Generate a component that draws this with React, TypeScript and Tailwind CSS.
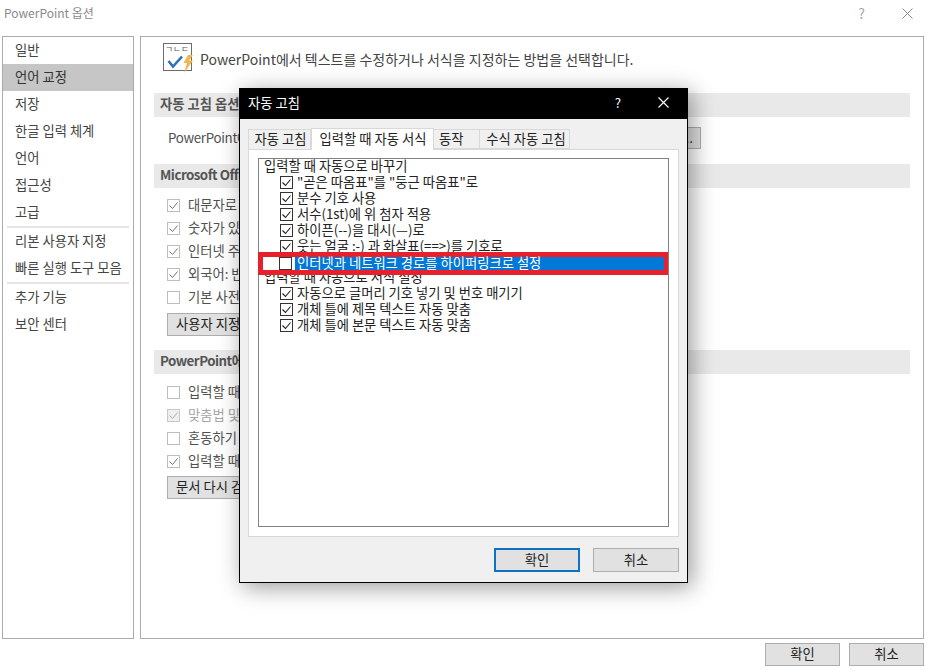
import React from 'react';

const sideTop = ['일반', '언어 교정', '저장', '한글 입력 체계', '언어', '접근성', '고급'];
const sideMid = ['리본 사용자 지정', '빠른 실행 도구 모음'];
const sideEnd = ['추가 기능', '보안 센터'];

const Check = ({ on = false, dim = false }: { on?: boolean; dim?: boolean }) => (
  <span className={`flex h-[13px] w-[13px] shrink-0 items-center justify-center border ${dim ? 'border-[#c8c8c8] bg-[#efefef]' : 'border-[#bdbdbd] bg-white'}`}>
    {on && (
      <svg width="11" height="11" viewBox="0 0 11 11" fill="none" stroke={dim ? '#b0b0b0' : '#707070'} strokeWidth="1">
        <path d="M1.5 5.5 L4.5 8.5 L9.5 2.5" />
      </svg>
    )}
  </span>
);

const DlgCheck = ({ on = true }: { on?: boolean }) => (
  <span className="flex h-[13px] w-[13px] shrink-0 items-center justify-center border border-[#333333] bg-white">
    {on && (
      <svg width="11" height="11" viewBox="0 0 11 11" fill="none" stroke="#222222" strokeWidth="1.1">
        <path d="M1.5 5.5 L4.5 8.5 L9.5 2.5" />
      </svg>
    )}
  </span>
);

const OptRow = ({ label, on, dim }: { label: string; on?: boolean; dim?: boolean }) => (
  <div className={`flex h-[23px] items-center gap-2 pl-[13px] whitespace-nowrap ${dim ? 'text-[#a6a6a6]' : 'text-[#505050]'}`}>
    <Check on={on} dim={dim} />
    <span className="pb-[1px]">{label}</span>
  </div>
);

const Bar = ({ children, className }: { children: React.ReactNode; className: string }) => (
  <div className={`flex h-6 items-center bg-[#e9e9e9] pb-[3px] pl-[6px] font-semibold whitespace-nowrap text-[#555555] ${className}`}>{children}</div>
);

const DlgRow = ({ label }: { label: string }) => (
  <div className="flex h-4 items-center gap-[4px] pl-[21px] whitespace-nowrap">
    <DlgCheck />
    <span className="pb-[1px]">{label}</span>
  </div>
);

const GrayBtn = ({ label, className }: { label: string; className: string }) => (
  <button className={`flex items-center border border-[#adadad] bg-[#e1e1e1] pb-[1px] text-[#222222] ${className}`}>{label}</button>
);

export default function App() {
  return (
    <div className="relative flex h-[671px] w-[927px] flex-col overflow-hidden bg-white font-['Noto_Sans_CJK_KR',sans-serif] text-[13.3px] leading-none">
      {/* title bar */}
      <div className="flex h-9 items-center justify-between pr-[14px] pb-[10px] pl-1 text-[12px] text-[#8a8a8a]">
        <span>PowerPoint 옵션</span>
        <div className="flex items-center gap-[37px]">
          <span className="text-[14px] text-[#a8a8a8]">?</span>
          <svg width="11" height="11" viewBox="0 0 11 11" stroke="#8a8a8a" strokeWidth="1"><path d="M0.5 0.5 L10.5 10.5 M10.5 0.5 L0.5 10.5" /></svg>
        </div>
      </div>

      <div className="flex h-[603px] gap-[6px] pl-[2px]">
        {/* sidebar */}
        <div className="w-[132px] border border-[#ababab] text-[#444444]">
          {sideTop.map((s) => (
            <div key={s} className={`flex h-[27px] items-center pb-[2px] pl-3 ${s === '언어 교정' ? 'bg-[#c6c6c6] text-[#333333]' : ''}`}>{s}</div>
          ))}
          <div className="mx-1 h-[2px] bg-[#e5e5e5]" />
          {sideMid.map((s) => (
            <div key={s} className="flex h-[27px] items-center pb-[2px] pl-3">{s}</div>
          ))}
          <div className="mx-1 h-[2px] bg-[#e5e5e5]" />
          {sideEnd.map((s) => (
            <div key={s} className="flex h-[27px] items-center pb-[2px] pl-3">{s}</div>
          ))}
        </div>

        {/* main panel */}
        <div className="w-[784px] border border-[#ababab] px-[13px] pt-[7px]">
          <div className="flex h-[30px] items-center gap-[5px] pb-[1px] pl-[9px] text-[14px] text-[#444444]">
            <svg width="32" height="31" viewBox="0 0 32 31" fill="none" className="shrink-0">
              <rect x="0.5" y="0.5" width="28" height="27" fill="#ffffff" stroke="#6b6b6b" />
              <text x="2" y="8.5" fontSize="8" textLength="24" lengthAdjust="spacingAndGlyphs" fill="#555555" fontFamily="Noto Sans CJK KR">ㄱㄴㄷ</text>
              <path d="M5.5 18 L10 23.5 L19 13.5" stroke="#2f6fb5" strokeWidth="2.6" />
              <path d="M25 12 L20.5 20 L24 20 L21 30 L30 17.5 L26 17.5 L30 12 Z" fill="#f0b84a" />
            </svg>
            <span>PowerPoint에서 텍스트를 수정하거나 서식을 지정하는 방법을 선택합니다.</span>
          </div>

          <Bar className="mt-[19px]">자동 고침 옵션</Bar>
          <div className="mt-[10px] flex h-[22px] items-center justify-between pr-[209px] pl-[14px] whitespace-nowrap text-[#505050]">
            <span className="pb-[1px] tracking-[-0.3px]">PowerPoint에</span>
            <GrayBtn label="..." className="h-[22px] w-[120px] justify-end pr-[7px]" />
          </div>

          <Bar className="mt-[15px] tracking-[-0.5px]">Microsoft Offi</Bar>
          <div className="mt-[6px]">
            <OptRow on label="대문자로" />
            <OptRow on label="숫자가 있" />
            <OptRow on label="인터넷 주" />
            <OptRow on label="외국어: 반" />
            <OptRow label="기본 사전" />
          </div>
          <GrayBtn label="사용자 지정" className="mt-1 ml-[13px] h-[23px] w-[130px] pl-[8px]" />

          <Bar className="mt-[14px] tracking-[-0.5px]">PowerPoint에</Bar>
          <div className="mt-[7px]">
            <OptRow label="입력할 때" />
            <OptRow on dim label="맞춤법 및" />
            <OptRow label="혼동하기" />
            <OptRow on label="입력할 때" />
          </div>
          <GrayBtn label="문서 다시 검" className="mt-[3px] ml-[13px] h-[23px] w-[130px] pl-[8px]" />
        </div>
      </div>

      {/* footer buttons */}
      <div className="mt-1 flex justify-end gap-[9px] pr-[3px]">
        <GrayBtn label="확인" className="h-[23px] w-[75px] justify-center" />
        <GrayBtn label="취소" className="h-[23px] w-[75px] justify-center" />
      </div>

      {/* dialog */}
      <div className="absolute top-[88px] left-[239px] h-[495px] w-[449px] border border-black bg-[#f0f0f0] text-[#222222] shadow-[4px_4px_22px_rgba(0,0,0,0.4)]">
        <div className="flex h-[30px] items-center justify-between bg-black pr-[18px] pb-[2px] pl-2 text-white">
          <span>자동 고침</span>
          <div className="flex items-center gap-[37px]">
            <span>?</span>
            <svg width="11" height="11" viewBox="0 0 11 11" stroke="#ffffff" strokeWidth="1.1"><path d="M0.5 0.5 L10.5 10.5 M10.5 0.5 L0.5 10.5" /></svg>
          </div>
        </div>

        {/* tabs */}
        <div className="mt-[8px] flex h-[22px] items-end pl-2">
          <div className="flex h-[20px] w-[63px] items-center justify-center border border-b-0 border-[#d9d9d9] bg-[#f0f0f0] pb-[1px] pl-[2px]">자동 고침</div>
          <div className="relative z-10 -mb-[1px] flex h-[22px] w-[123px] items-center justify-center border border-b-0 border-[#d9d9d9] bg-white pb-[2px] pl-[1px]">입력할 때 자동 서식</div>
          <div className="flex h-[20px] w-[46px] items-center border-y border-r border-[#d9d9d9] pb-[1px] pl-[5px]">동작</div>
          <div className="flex h-[20px] w-[90px] items-center justify-center border-y border-r border-[#d9d9d9] pb-[1px] pl-[3px]">수식 자동 고침</div>
        </div>

        {/* panel */}
        <div className="mx-2 h-[388px] border border-[#d9d9d9] bg-white px-[9px] pt-2">
          <div className="h-[369px] border border-[#828282] bg-white">
            <div className="flex h-[15px] items-center pb-[1px] pl-[5px] whitespace-nowrap">입력할 때 자동으로 바꾸기</div>
            <DlgRow label={'"곧은 따옴표"를 "둥근 따옴표"로'} />
            <DlgRow label="분수 기호 사용" />
            <DlgRow label="서수(1st)에 위 첨자 적용" />
            <DlgRow label="하이픈(--)을 대시(—)로" />
            <DlgRow label="웃는 얼굴 :-) 과 화살표(==>)를 기호로" />
            {/* highlighted row framed in red */}
            <div className="relative z-10 -mt-[2px] -ml-[1px] flex h-[23px] w-[410px] border-y-[5px] border-r-4 border-l-[5px] border-[#e8202c]">
              <div className="flex h-[13px] w-[32px] items-center bg-white pl-[16px]">
                <DlgCheck on={false} />
              </div>
              <span className="flex h-[13px] flex-1 items-center bg-[#0078d7] pb-[1px] pl-[2px] whitespace-nowrap text-white">인터넷과 네트워크 경로를 하이퍼링크로 설정</span>
            </div>
            <div className="-mt-[5px] flex h-[15px] items-center pb-[1px] pl-[5px] whitespace-nowrap">입력할 때 자동으로 서식 설정</div>
            <DlgRow label="자동으로 글머리 기호 넣기 및 번호 매기기" />
            <DlgRow label="개체 틀에 제목 텍스트 자동 맞춤" />
            <DlgRow label="개체 틀에 본문 텍스트 자동 맞춤" />
          </div>
        </div>

        {/* dialog buttons */}
        <div className="mt-[11px] flex justify-end gap-[13px] pr-2">
          <button className="flex h-6 w-[86px] items-center justify-center border-2 border-[#0f73c0] bg-[#e1e1e1] pb-[1px]">확인</button>
          <GrayBtn label="취소" className="h-6 w-[86px] justify-center" />
        </div>
      </div>
    </div>
  );
}
